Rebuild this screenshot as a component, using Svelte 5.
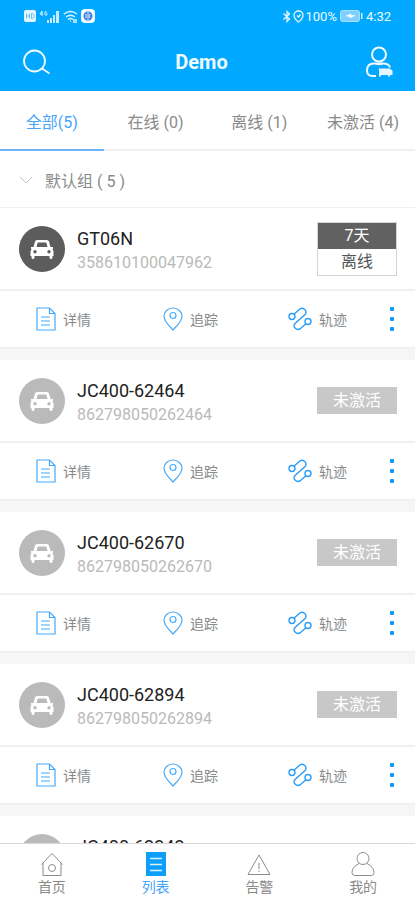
<script>
  const tabs = [
    { id: 'all', label: '全部(5)' },
    { id: 'online', label: '在线 (0)' },
    { id: 'offline', label: '离线 (1)' },
    { id: 'inactive', label: '未激活 (4)' },
  ];

  const devices = [
    { name: 'GT06N', imei: '358610100047962', status: 'offline', days: '7天' },
    { name: 'JC400-62464', imei: '862798050262464', status: 'inactive' },
    { name: 'JC400-62670', imei: '862798050262670', status: 'inactive' },
    { name: 'JC400-62894', imei: '862798050262894', status: 'inactive' },
    { name: 'JC400-62343', imei: '862798050262343', status: 'inactive' },
  ];

  const pages = [
    { id: 'home', label: '首页' },
    { id: 'list', label: '列表' },
    { id: 'alarm', label: '告警' },
    { id: 'mine', label: '我的' },
  ];

  let activeTab = $state('all');
  let activePage = $state('list');
  let open = $state(true);

  let shown = $derived(
    activeTab === 'all' ? devices : devices.filter((d) => d.status === activeTab)
  );
</script>

<div class="app">
  <header>
    <div class="status">
      <div class="status-side">
        <svg width="12" height="12" viewBox="0 0 12 12">
          <rect width="12" height="12" rx="2" fill="#e3f5ff" />
          <path d="M2.5 3.5v5M5.5 3.5v5M2.5 6h3M7.5 3.5v5h1q1.5 0 1.5-2.500t-1.500-2.500z" fill="none" stroke="#6fc4f7" />
        </svg>
        <svg width="21" height="13" viewBox="0 0 21 13">
          <path d="M3 1 1 4h3M3 1v5M8 2H6v3h2V3.500" fill="none" stroke="#d9f1ff" />
          <path d="M8 10h2v3H8zM11 8h2v5h-2zM14 5h2v8h-2zM17 1h3v12h-3z" fill="#c8ebff" />
        </svg>
        <svg width="15" height="13" viewBox="0 0 15 13" fill="none" stroke="#d9f1ff" stroke-width="1.500">
          <path d="M1 4q6.500-5 13 0M3 7q4.500-3.500 9 0M5 9.500q2.500-2 5 0" />
          <path d="M7 11h1M11 9v4M13 9v4" />
        </svg>
        <svg width="14" height="14" viewBox="0 0 14 14">
          <rect width="14" height="14" rx="4" fill="#f2faff" />
          <circle cx="7" cy="7" r="4.500" fill="#3a7fe0" />
          <path d="M7 3v8M5 5v4M9 5l-1 2 1 2" fill="none" stroke="#dcecff" />
        </svg>
      </div>
      <div class="status-side right">
        <svg width="10" height="13" viewBox="0 0 10 13" fill="none" stroke="#e3f5ff" stroke-width="1.300">
          <path d="M1.500 3.500l6 5.500L5 11.500v-10L7.500 4l-6 5.500" />
        </svg>
        <svg width="11" height="13" viewBox="0 0 11 13" fill="none" stroke="#e3f5ff" stroke-width="1.300">
          <path d="M5.500 12Q1 8.500 1 5.200a4.500 4.200 0 0 1 9 0Q10 8.500 5.500 12z" />
          <path d="M4 5.500l1.500 1.500 2-2.500" />
        </svg>
        <span>100%</span>
        <svg class="battery" width="23" height="12" viewBox="0 0 23 12">
          <rect x=".5" y=".5" width="19" height="11" rx="2" fill="#7fd0ff" stroke="#a5deff" />
          <path d="M21 3h1.500v6H21z" fill="#d9f1ff" />
          <path d="M6 6l5-2v1.500h4L10 8V6.500z" fill="#fff" stroke="#fff" stroke-width=".5" />
        </svg>
        <span>4:32</span>
      </div>
    </div>
    <div class="title-bar">
      <button aria-label="搜索">
        <svg width="28" height="26" viewBox="0 0 28 26" fill="none" stroke="#f0faff" stroke-width="1.800">
          <circle cx="12.500" cy="12" r="10.500" />
          <path d="M20 19.500 27.500 24.500" />
        </svg>
      </button>
      <h1>Demo</h1>
      <button aria-label="账户">
        <svg width="28" height="32" viewBox="0 0 28 32" fill="none" stroke="#f0faff" stroke-width="2">
          <circle cx="14" cy="8.500" r="7" />
          <path d="M11 30H7.500Q2 30 2 24.500q0-7 7-7h9q6 0 7 4" />
          <path d="M10 17.500q4 2.500 8 0" stroke-width="1.200" />
          <path d="M13.500 22.500h11l3 2V29H25v1.500h-2V29h-7v1.500h-2V24z" fill="#e3f5ff" stroke="none" />
        </svg>
      </button>
    </div>
  </header>

  <nav class="tabs">
    {#each tabs as tab}
      <button class:active={activeTab === tab.id} onclick={() => (activeTab = tab.id)}>
        {tab.label}
      </button>
    {/each}
  </nav>

  <main>
    <button class="group" aria-expanded={open} onclick={() => (open = !open)}>
      <svg class:closed={!open} width="14" height="8" viewBox="0 0 14 8" fill="none" stroke="#c4c4c4">
        <path d="M1 1l6 6 6-6" />
      </svg>
      默认组 ( 5 )
    </button>

    {#if open}
      {#each shown as device}
        <article>
          <div class="info">
            <div class="avatar" class:dark={device.status === 'offline'}>
              <svg width="24" height="20" viewBox="0 0 24 20">
                <path
                  fill="#fff"
                  fill-rule="evenodd"
                  d="M7 1h10q1.500 0 2 1.500L20.500 8H23v2h-.800q1.300 1 1.300 3v4H22.500v1.500q0 1.500-1.500 1.500t-1.500-1.500V17h-15v1.500Q4.500 20 3 20t-1.500-1.500V17H.500v-4q0-2 1.300-3H1V8h2.500L5 2.500Q5.500 1 7 1zM7.700 3.500 6.500 8h11l-1.200-4.500zM5 11a1.700 1.700 0 1 0 0 3.400A1.700 1.700 0 0 0 5 11zM19 11a1.700 1.700 0 1 0 0 3.400 1.700 1.700 0 0 0 0-3.400z"
                />
              </svg>
            </div>
            <div class="text">
              <h2>{device.name}</h2>
              <p>{device.imei}</p>
            </div>
            {#if device.status === 'offline'}
              <div class="badge offline">
                <span>{device.days}</span>
                <span>离线</span>
              </div>
            {:else}
              <div class="badge">未激活</div>
            {/if}
          </div>
          <div class="actions">
            <button>
              <svg width="20" height="24" viewBox="0 0 20 24" fill="none" stroke="#45a9f8" stroke-width="1.200">
                <path d="M1 1h12.500L19 6.500V23H1z" />
                <path d="M13.500 1v5.500H19M5 10h9M5 14h9M5 18h9" />
              </svg>
              详情
            </button>
            <button>
              <svg width="20" height="24" viewBox="0 0 20 24" fill="none" stroke="#45a9f8" stroke-width="1.200">
                <path d="M10 23Q1 14 1 9.500a9 8.500 0 0 1 18 0Q19 14 10 23z" />
                <circle cx="10" cy="8.500" r="3" />
              </svg>
              追踪
            </button>
            <button>
              <svg width="24" height="24" viewBox="0 0 24 24" fill="none" stroke="#2b9df7" stroke-width="1.400">
                <circle cx="4" cy="9.500" r="3" />
                <circle cx="20" cy="14.500" r="3" />
                <path d="M6 7.300 11.500 2.200q2.500-2 5 0t.800 5L7 16.500q-2 2.300 0 4.500t5 1L18 16.700" />
              </svg>
              轨迹
            </button>
            <button class="more" aria-label="更多">
              <svg width="4" height="24" viewBox="0 0 4 24" fill="#0d9bf5">
                <rect width="4" height="4" rx="1" />
                <rect y="10" width="4" height="4" rx="1" />
                <rect y="20" width="4" height="4" rx="1" />
              </svg>
            </button>
          </div>
        </article>
      {/each}
    {/if}
  </main>

  <nav class="pages">
    {#each pages as page}
      <button class:active={activePage === page.id} onclick={() => (activePage = page.id)}>
        <svg width="24" height="24" viewBox="0 0 24 24" fill="none" stroke="#8c8c8c">
          {#if page.id === 'home'}
            <path d="M1.500 12.500 12 1.500l10.500 11M3 11v12.500h18V11" />
            <circle cx="12" cy="16" r="3.500" />
          {:else if page.id === 'list'}
            <rect x="2" width="20" height="24" fill="#0d9ffb" stroke="none" />
            <path d="M6 6.500h12M6 12.500h12M6 18.500h12" stroke="#d9f1ff" stroke-width="1.500" />
          {:else if page.id === 'alarm'}
            <path d="M12 3 1 22.500h22zM12 11v6M12 18.500v1.500" />
          {:else}
            <circle cx="12" cy="6.500" r="6" />
            <path d="M8 11.500Q1 15 1 20.500q0 3 2.500 3h17q2.500 0 2.500-3Q23 15 16 11.500" />
          {/if}
        </svg>
        {page.label}
      </button>
    {/each}
  </nav>
</div>

<style>
  :global(body) {
    margin: 0;
    background: #fff;
  }

  .app {
    display: flex;
    flex-direction: column;
    height: 100vh;
    font-family: Roboto, "Noto Sans CJK SC", sans-serif;
    color: #8a8a8a;
  }

  button {
    display: flex;
    align-items: center;
    justify-content: center;
    margin: 0;
    padding: 0;
    border: 0;
    background: none;
    color: inherit;
    font: inherit;
    cursor: pointer;
  }

  svg {
    flex: none;
  }

  h1,
  h2,
  p {
    margin: 0;
  }

  header {
    background: #00a9ff;
    color: #f0faff;
  }

  .status {
    display: flex;
    justify-content: space-between;
    align-items: center;
    height: 32px;
    padding: 0 24px;
    font-size: 13px;
  }

  .status-side {
    display: flex;
    align-items: center;
    gap: 3px;
  }

  .right {
    gap: 1px;
  }

  .battery {
    margin: 0 2px;
  }

  .title-bar {
    display: flex;
    align-items: center;
    height: 59px;
    padding: 0 22px;
  }

  h1 {
    flex: 1;
    padding-right: 12px;
    font-size: 20px;
    font-weight: 700;
    text-align: center;
  }

  .tabs {
    display: flex;
    height: 60px;
    font-size: 16px;
  }

  .tabs button {
    flex: 1;
    padding-top: 2px;
    border-bottom: 2px solid #f0f0f0;
  }

  .tabs .active {
    color: #45a5fb;
    border-color: #6cb5fc;
  }

  main {
    flex: 1;
    min-height: 0;
    overflow: hidden;
    background: #f6f6f6;
  }

  .group {
    justify-content: flex-start;
    gap: 12px;
    width: 100%;
    height: 57px;
    padding: 2px 19px 0;
    border-bottom: 1px solid #f0f0f0;
    background: #fff;
    font-size: 16px;
  }

  .closed {
    transform: rotate(-90deg);
  }

  article {
    margin-bottom: 11px;
    border-bottom: 2px solid #f0f0f0;
    background: #fff;
  }

  .info {
    display: flex;
    align-items: center;
    gap: 12px;
    height: 81px;
    padding: 0 18px 0 19px;
    border-bottom: 2px solid #f0f0f0;
  }

  .avatar {
    display: flex;
    align-items: center;
    justify-content: center;
    width: 46px;
    height: 46px;
    border-radius: 50%;
    background: #bababa;
  }

  .avatar.dark {
    background: #5c5c5c;
  }

  .text {
    flex: 1;
    padding-top: 4px;
  }

  h2 {
    font-size: 18px;
    font-weight: 400;
    line-height: 24px;
    color: #222;
  }

  p {
    font-size: 16px;
    line-height: 24px;
    color: #bababa;
  }

  .badge {
    width: 80px;
    background: #c8c8c8;
    color: #fff;
    font-size: 16px;
    line-height: 27px;
    text-align: center;
  }

  .badge.offline {
    box-sizing: border-box;
    border: 1px solid #d4d4d4;
    background: #fff;
    color: #555;
    line-height: 26px;
  }

  .offline span {
    display: block;
  }

  .offline span:first-child {
    background: #616161;
    color: #fff;
  }

  .actions {
    display: flex;
    height: 56px;
    padding-right: 12px;
    font-size: 14px;
  }

  .actions button {
    flex: 1;
    gap: 7px;
  }

  .actions .more {
    flex: none;
    width: 22px;
  }

  .pages {
    display: flex;
    height: 56px;
    border-top: 1px solid #d8d8d8;
    background: #fff;
    font-size: 14px;
    line-height: 20px;
  }

  .pages button {
    flex: 1;
    flex-direction: column;
    gap: 1px;
    padding-top: 5px;
  }

  .pages .active {
    color: #45a5fb;
  }
</style>
